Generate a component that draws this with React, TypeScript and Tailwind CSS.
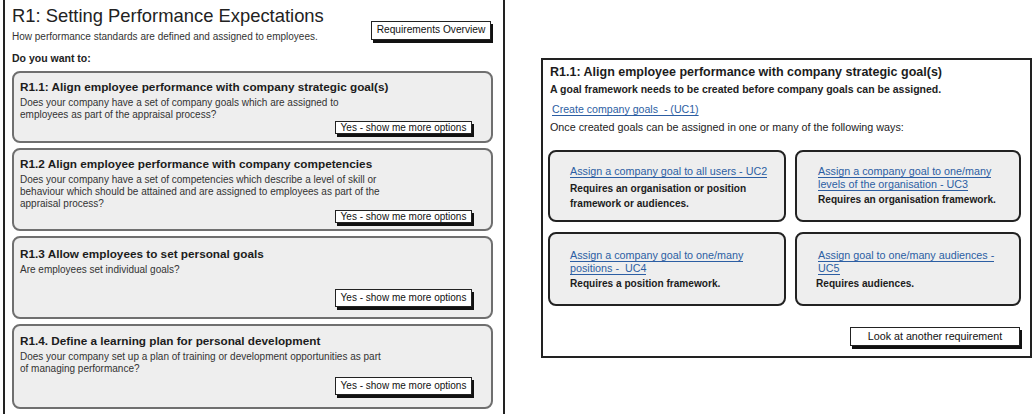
import React from 'react'

const font = { fontFamily: '"Liberation Sans", Arial, sans-serif' }

type Requirement = {
  title: string
  lines: string[]
  h: string
  pt: string
  pb: string
}

const requirements: Requirement[] = [
  {
    title: 'R1.1: Align employee performance with company strategic goal(s)',
    lines: ['Does your company have a set of company goals which are assigned to', 'employees as part of the appraisal process?'],
    h: 'h-[72px]',
    pt: 'pt-[7px]',
    pb: 'pb-[7px]',
  },
  {
    title: 'R1.2 Align employee performance with company competencies',
    lines: [
      'Does your company have a set of competencies which describe a level of skill or',
      'behaviour which should be attained and are assigned to employees as part of the',
      'appraisal process?',
    ],
    h: 'h-[83px]',
    pt: 'pt-[7px]',
    pb: 'pb-[6px]',
  },
  {
    title: 'R1.3 Allow employees to set personal goals',
    lines: ['Are employees set individual goals?'],
    h: 'h-[83px]',
    pt: 'pt-[9px]',
    pb: 'pb-[10px]',
  },
  {
    title: 'R1.4. Define a learning plan for personal development',
    lines: ['Does your company set up a plan of training or development opportunities as part', 'of managing performance?'],
    h: 'h-[85px]',
    pt: 'pt-[8px]',
    pb: 'pb-[12px]',
  },
]

const options = [
  { link: ['Assign a company goal to all users - UC2'], note: ['Requires an organisation or position', 'framework or audiences.'] },
  { link: ['Assign a company goal to one/many', 'levels of the organisation - UC3'], note: ['Requires an organisation framework.'] },
  { link: ['Assign a company goal to one/many', 'positions -  UC4'], note: ['Requires a position framework.'] },
  { link: ['Assign goal to one/many audiences -', 'UC5'], note: ['Requires audiences.'] },
]

// sketchy button: thin border with a heavy offset shadow
const SketchButton = ({ label, className = '' }: { label: string; className?: string }) => (
  <div
    className={`bg-white border border-[#222] shadow-[2px_3px_0_#111] text-[#111] leading-none flex items-center justify-center whitespace-pre ${className}`}
  >
    {label}
  </div>
)

export default function App() {
  return (
    <div className="w-[1034px] h-[414px] overflow-hidden bg-white flex items-start text-[#1e1e1e]" style={font}>
      {/* Left: requirement list */}
      <div className="ml-[3px] w-[502px] h-[414px] border-x-2 border-[#222] pl-[7px] pr-[10px]">
        <div className="flex justify-between">
          <div>
            <h1 className="text-[18.4px] leading-[20px] pt-[6px] text-[#222]">R1: Setting Performance Expectations</h1>
            <p className="text-[10px] leading-[12px] mt-[5px] text-[#333]">How performance standards are defined and assigned to employees.</p>
          </div>
          <SketchButton label="Requirements Overview" className="text-[10.2px] mt-[21px] mr-[2px] w-[120px] h-[19px]" />
        </div>
        <p className="text-[10.5px] font-bold leading-[14px] mt-[8px] text-[#222]">Do you want to:</p>

        <div className="mt-[6px] flex flex-col gap-[5px]">
          {requirements.map((r) => (
            <div
              key={r.title}
              className={`${r.h} ${r.pt} ${r.pb} rounded-[8px] border-2 border-[#6f6f6f] bg-[#eeeeee] pl-[6px] pr-[19px] flex flex-col`}
            >
              <h3 className="text-[11.75px] font-bold leading-[14px] text-[#1c1c1c]">{r.title}</h3>
              <div className="mt-[3px] text-[10px] leading-[12px] text-[#333]">
                {r.lines.map((l) => (
                  <div key={l}>{l}</div>
                ))}
              </div>
              <SketchButton label="Yes - show me more options" className="text-[10px] mt-auto self-end w-[137px] h-[18px]" />
            </div>
          ))}
        </div>
      </div>

      {/* Right: detail of R1.1 */}
      <div className="ml-[36px] mt-[58px] w-[491px] h-[300px] border-2 border-[#222] pl-[7px] pr-[9px] pt-[5px] pb-[10px] flex flex-col">
        <h2 className="text-[12.5px] font-bold leading-[14px] text-[#1c1c1c]">
          R1.1: Align employee performance with company strategic goal(s)
        </h2>
        <p className="text-[10.5px] font-bold leading-[12px] mt-[4px] text-[#222]">
          A goal framework needs to be created before company goals can be assigned.
        </p>
        <a className="mt-[8px] ml-[2px] text-[10.6px] leading-[12px] text-[#2c5ea3] underline underline-offset-2 whitespace-pre self-start">
          Create company goals  - (UC1)
        </a>
        <p className="text-[10.75px] leading-[12px] mt-[6px] text-[#222]">
          Once created goals can be assigned in one or many of the following ways:
        </p>

        <div className="mt-[17px] -ml-[2px] grid grid-cols-[238px_226px] grid-rows-[72px_74px] gap-x-[9px] gap-y-[10px]">
          {options.map((o, i) => (
            <div
              key={i}
              className={`rounded-[8px] border-2 border-[#222] bg-[#eeeeee] ${i < 2 ? 'pt-[13px]' : 'pt-[15px]'} ${i % 2 === 0 ? 'pl-[20px]' : 'pl-[21px]'}`}
            >
              <div className="text-[10.75px] leading-[13px] text-[#2c5ea3]">
                {o.link.map((l) => (
                  <div key={l} className="whitespace-pre">
                    <span className="border-b border-[#2c5ea3]">{l}</span>
                  </div>
                ))}
              </div>
              <div className={`text-[10.1px] font-bold leading-[15px] text-[#1c1c1c] ${o.link.length > 1 ? 'mt-[1px]' : 'mt-[3px]'} ${i === 3 ? '-ml-[2px]' : ''}`}>
                {o.note.map((n) => (
                  <div key={n}>{n}</div>
                ))}
              </div>
            </div>
          ))}
        </div>

        <div className="mt-auto flex justify-end pr-[1px]">
          <SketchButton label="Look at another requirement" className="text-[10.7px] w-[170px] h-[19px]" />
        </div>
      </div>
    </div>
  )
}
